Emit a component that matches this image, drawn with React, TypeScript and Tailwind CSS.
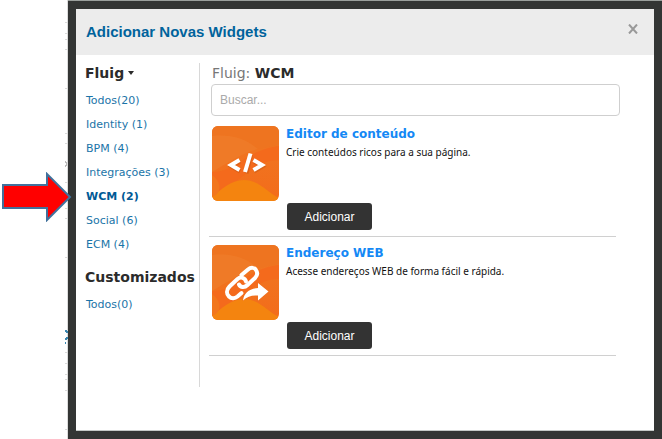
import React, { useState } from "react";

interface Category {
  label: string;
  active?: boolean;
}

interface Widget {
  title: string;
  description: string;
  icon: React.ReactNode;
}

const fluigCategories: Category[] = [
  { label: "Todos(20)" },
  { label: "Identity (1)" },
  { label: "BPM (4)" },
  { label: "Integrações (3)" },
  { label: "WCM (2)", active: true },
  { label: "Social (6)" },
  { label: "ECM (4)" },
];

const customCategories: Category[] = [{ label: "Todos(0)" }];

// Orange tile with soft waves, shared by every widget
const Tile = ({ id, children }: { id: string; children: React.ReactNode }) => (
  <svg
    viewBox="0 0 67 75"
    className="h-[75px] w-[67px] shrink-0 rounded-md"
    aria-hidden="true"
  >
    <defs>
      <linearGradient id={id} x1="0" y1="0" x2="0" y2="1">
        <stop offset="0" stopColor="#ef7823" />
        <stop offset="1" stopColor="#f36c1a" />
      </linearGradient>
    </defs>
    <rect width="67" height="75" fill={`url(#${id})`} />
    <path d="M0 10C20 8 34 13 46 23C54 22 61 20 67 19V0H0Z" fill="#ee7420" />
    <path d="M0 10C20 8 34 13 46 23C30 27 14 38 0 46Z" fill="#ef7a27" />
    <path d="M0 46C24 46 34 24 67 20V34C40 34 30 58 0 68Z" fill="#f46a1c" />
    <path d="M0 70C10 64 18 54 32 54C47 54 55 66 67 72V75H0Z" fill="#f4840f" />
    <path d="M0 49C8 55 10 63 4 69L0 71Z" fill="#f2761c" />
    {children}
  </svg>
);

const CodeIcon = () => (
  <Tile id="tile-code">
    <g fill="none" stroke="#a84c10" strokeWidth="4" opacity="0.3">
      <path d="M28 35.500L19.500 40.500L28 45.500" />
      <path d="M42 35.500L50.500 40.500L42 45.500" />
      <path d="M39 29L34.500 47.500" />
    </g>
    <g fill="none" stroke="#fff" strokeWidth="4">
      <path d="M27.500 34L19 39L27.500 44" />
      <path d="M41.500 34L50 39L41.500 44" />
      <path d="M38.500 27.500L33 46" />
    </g>
  </Tile>
);

const LinkIcon = () => (
  <Tile id="tile-link">
    <g fill="none" stroke="#fff" strokeWidth="4" strokeLinecap="round">
      <path d="M29.500 30L36 24.500C39 22 42.500 22.500 44 25C46 28 45.500 30.500 43 33L35.500 40C32.500 43 28.500 42.500 27 39.500" />
      <path d="M34 36.500C33 32.500 28.500 31.500 25.500 34L17.500 41.500C14 45 14.500 49 17 51.500C19.500 54 23 53.500 25.500 51.500L29.500 48" />
    </g>
    <path
      d="M31 55.500C32 48 37 43.500 46 43V38L56.500 46.500L46 55.500V50.500C40 50 35.500 51 31 55.500Z"
      fill="#fff"
      stroke="#ee6f1e"
      strokeWidth="1"
      paintOrder="stroke"
    />
  </Tile>
);

const widgets: Widget[] = [
  {
    title: "Editor de conteúdo",
    description: "Crie conteúdos ricos para a sua página.",
    icon: <CodeIcon />,
  },
  {
    title: "Endereço WEB",
    description: "Acesse endereços WEB de forma fácil e rápida.",
    icon: <LinkIcon />,
  },
];

const CategoryList = ({ items }: { items: Category[] }) => (
  <ul>
    {items.map((item) => (
      <li key={item.label} className="h-6 pl-px leading-6">
        <a
          href="#"
          className={
            item.active
              ? "text-[11px] font-bold text-[#005a96]"
              : "text-[11px] text-[#1a74a8]"
          }
        >
          {item.label}
        </a>
      </li>
    ))}
  </ul>
);

const WidgetRow = ({ widget }: { widget: Widget }) => (
  <li className="flex h-[119px] border-b border-[#d0d0d0] pt-2 pl-[3px]">
    {widget.icon}
    <div className="flex flex-1 flex-col items-start pl-[7px]">
      <h3 className="font-['DejaVu_Sans',sans-serif] text-xs leading-4 font-bold text-[#1488f5]">
        {widget.title}
      </h3>
      <p className="mt-0.5 font-['Noto_Sans',sans-serif] text-[10px] leading-4 text-[#111]">
        {widget.description}
      </p>
      <button
        type="button"
        className="mt-[43px] ml-px h-[27px] w-[85px] rounded-[3px] bg-[#333] font-['Liberation_Sans',sans-serif] text-xs text-white"
      >
        Adicionar
      </button>
    </div>
  </li>
);

// Cut-off edge of the page that sits behind the dialog
const PageEdge = () => (
  <svg
    viewBox="0 0 3 439"
    className="h-[439px] w-[3px] shrink-0"
    shapeRendering="crispEdges"
    aria-hidden="true"
  >
    <path d="M2.500 0V439" stroke="#dcdcdc" />
    <path
      d="M0 22.500H3M0 33.500H3M0 39.500H3M0 49.500H3M0 88.500H3M0 133.500H3M0 143.500H3M0 182.500H3M0 208.500H3M0 218.500H3M0 257.500H3M0 352.500H3M0 363.500H3M0 374.500H3M0 379.500H3M0 390.500H3M0 429.500H3"
      stroke="#dadada"
    />
    <path d="M0 161L2 164L0 167" fill="none" stroke="#bbb" />
    <path
      d="M0 330H2V331H3V333H1V332H0ZM1 337H3V339H2V340H0V338H1ZM0 342H1V344H0Z"
      fill="#3a86b0"
    />
  </svg>
);

const App: React.FC = () => {
  const [search, setSearch] = useState("");

  return (
    <div className="relative flex min-h-screen bg-white font-['DejaVu_Sans',Verdana,sans-serif]">
      <div className="flex w-[68px] shrink-0 justify-end overflow-hidden">
        <PageEdge />
      </div>

      <div className="flex flex-1 border-t border-[#9a9f9c] bg-[#333534] px-2 pt-2 pb-[8px]">
        <section
          className="flex flex-1 flex-col border-b border-[#c4c8c6] bg-white"
          role="dialog"
          aria-labelledby="dialog-title"
        >
          <header className="flex h-[46px] items-center justify-between bg-[#ececec] pr-[14px] pl-[10px]">
            <h1
              id="dialog-title"
              className="font-['Liberation_Sans',sans-serif] text-[15px] font-bold text-[#00639c]"
            >
              Adicionar Novas Widgets
            </h1>
            <button type="button" aria-label="Fechar" className="mb-1.5 p-0.5">
              <svg viewBox="0 0 10 10" className="size-[10px]">
                <path
                  d="M1 0.500L9 9.500M9 0.500L1 9.500"
                  stroke="#999"
                  strokeWidth="2"
                />
              </svg>
            </button>
          </header>

          <div className="flex pt-2">
            <nav className="h-[324px] w-[124px] shrink-0 border-r border-[#d8d8d8] pl-[9px]">
              <h2 className="h-6 text-[14px] leading-5 font-bold text-[#2b2b2b]">
                <button type="button" className="flex items-center gap-1">
                  Fluig
                  <svg viewBox="0 0 6 4" className="h-1 w-1.5">
                    <path d="M0 0H6L3 4Z" fill="#2b2b2b" />
                  </svg>
                </button>
              </h2>
              <CategoryList items={fluigCategories} />
              <h2 className="mt-3 mb-1 text-[14px] leading-5 font-bold text-[#2b2b2b]">
                Customizados
              </h2>
              <CategoryList items={customCategories} />
            </nav>

            <main className="flex-1 pr-[34px] pl-[9px]">
              <h2 className="pl-[3px] text-[14px] leading-5 text-[#777]">
                Fluig: <strong className="text-[#2b2b2b]">WCM</strong>
              </h2>
              <div className="mt-px pl-0.5">
                <input
                  type="text"
                  aria-label="Buscar"
                  placeholder="Buscar..."
                  value={search}
                  onChange={(e) => setSearch(e.target.value)}
                  className="block h-8 w-full rounded border border-[#cfcfcf] px-2 font-['Liberation_Sans',sans-serif] text-xs placeholder:text-[#aaa]"
                />
              </div>
              <ul className="mt-0.5 mr-1">
                {widgets.map((widget) => (
                  <WidgetRow key={widget.title} widget={widget} />
                ))}
              </ul>
            </main>
          </div>
        </section>
      </div>

      {/* Callout arrow over the dialog border */}
      <svg
        viewBox="0 0 72 50"
        className="absolute top-[172px] left-0 h-[50px] w-[72px]"
        aria-hidden="true"
      >
        <path
          d="M3 13H47V2L70 25L47 48V36H3Z"
          fill="#f00"
          stroke="#41719c"
          strokeWidth="2"
        />
      </svg>
    </div>
  );
};

export default App;
